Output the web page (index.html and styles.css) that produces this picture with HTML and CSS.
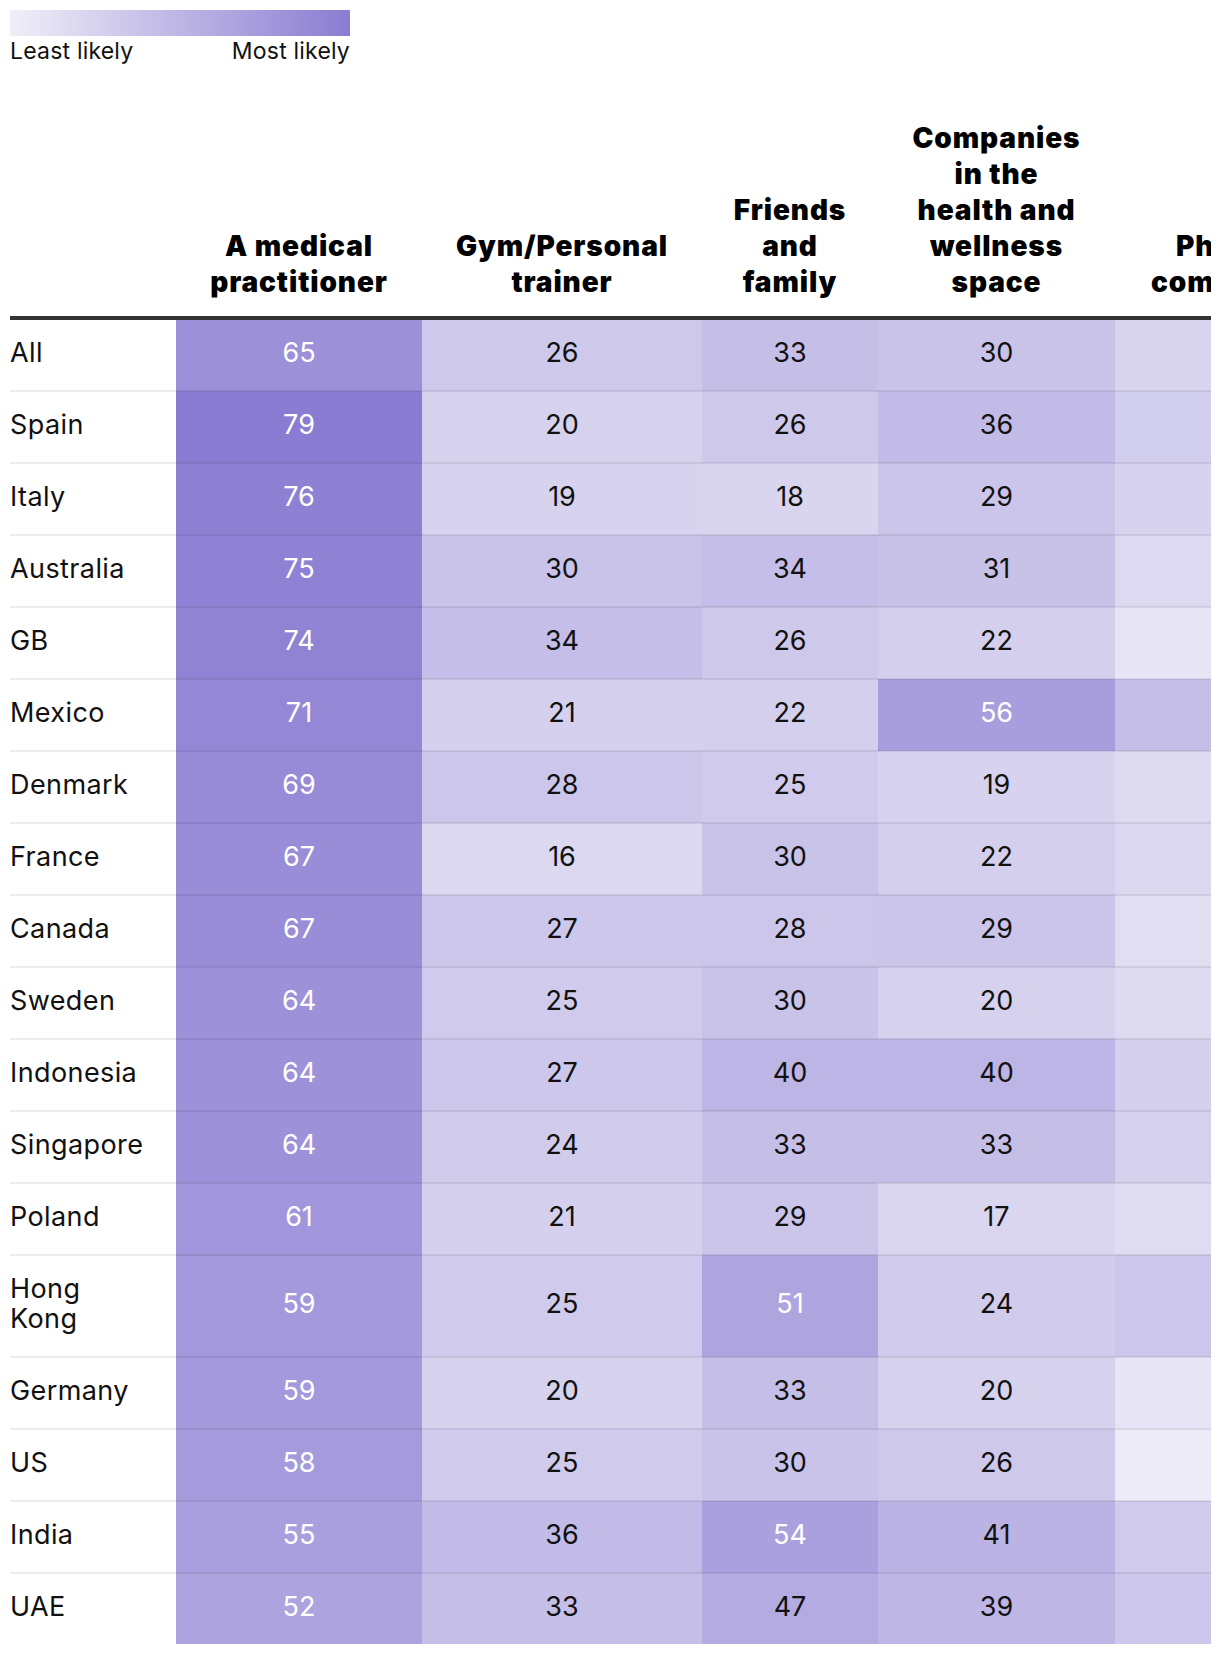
FILE: index.html
```html
<!DOCTYPE html>
<html lang="en">
<head>
<meta charset="utf-8">
<title>Heatmap</title>
<link rel="stylesheet" href="styles.css">
</head>
<body>
<div class="page">
  <div class="legend">
    <div class="legend-bar"></div>
    <div class="legend-labels"><span>Least likely</span><span>Most likely</span></div>
  </div>
  <div class="scroll">
    <table class="heat">
      <colgroup>
        <col class="c-label"><col class="c-1"><col class="c-2"><col class="c-3"><col class="c-4"><col class="c-5">
      </colgroup>
      <thead>
        <tr>
          <th></th>
          <th>A medical<br>practitioner</th>
          <th>Gym/Personal<br>trainer</th>
          <th>Friends<br>and<br>family</th>
          <th>Companies<br>in the<br>health and<br>wellness<br>space</th>
          <th>Pharma<br>companies</th>
        </tr>
      </thead>
      <tbody>
        <tr><td class="lbl">All</td><td class="hi" style="--v:65">65</td><td style="--v:26">26</td><td style="--v:33">33</td><td style="--v:30">30</td><td style="--v:18">18</td></tr>
        <tr><td class="lbl">Spain</td><td class="hi" style="--v:79">79</td><td style="--v:20">20</td><td style="--v:26">26</td><td style="--v:36">36</td><td style="--v:23">23</td></tr>
        <tr><td class="lbl">Italy</td><td class="hi" style="--v:76">76</td><td style="--v:19">19</td><td style="--v:18">18</td><td style="--v:29">29</td><td style="--v:19">19</td></tr>
        <tr><td class="lbl">Australia</td><td class="hi" style="--v:75">75</td><td style="--v:30">30</td><td style="--v:34">34</td><td style="--v:31">31</td><td style="--v:15">15</td></tr>
        <tr><td class="lbl">GB</td><td class="hi" style="--v:74">74</td><td style="--v:34">34</td><td style="--v:26">26</td><td style="--v:22">22</td><td style="--v:7">7</td></tr>
        <tr><td class="lbl">Mexico</td><td class="hi" style="--v:71">71</td><td style="--v:21">21</td><td style="--v:22">22</td><td class="hi" style="--v:56">56</td><td style="--v:33">33</td></tr>
        <tr><td class="lbl">Denmark</td><td class="hi" style="--v:69">69</td><td style="--v:28">28</td><td style="--v:25">25</td><td style="--v:19">19</td><td style="--v:14">14</td></tr>
        <tr><td class="lbl">France</td><td class="hi" style="--v:67">67</td><td style="--v:16">16</td><td style="--v:30">30</td><td style="--v:22">22</td><td style="--v:16">16</td></tr>
        <tr><td class="lbl">Canada</td><td class="hi" style="--v:67">67</td><td style="--v:27">27</td><td style="--v:28">28</td><td style="--v:29">29</td><td style="--v:12">12</td></tr>
        <tr><td class="lbl">Sweden</td><td class="hi" style="--v:64">64</td><td style="--v:25">25</td><td style="--v:30">30</td><td style="--v:20">20</td><td style="--v:14">14</td></tr>
        <tr><td class="lbl">Indonesia</td><td class="hi" style="--v:64">64</td><td style="--v:27">27</td><td style="--v:40">40</td><td style="--v:40">40</td><td style="--v:21">21</td></tr>
        <tr><td class="lbl">Singapore</td><td class="hi" style="--v:64">64</td><td style="--v:24">24</td><td style="--v:33">33</td><td style="--v:33">33</td><td style="--v:20">20</td></tr>
        <tr><td class="lbl">Poland</td><td class="hi" style="--v:61">61</td><td style="--v:21">21</td><td style="--v:29">29</td><td style="--v:17">17</td><td style="--v:13">13</td></tr>
        <tr><td class="lbl">Hong<br>Kong</td><td class="hi" style="--v:59">59</td><td style="--v:25">25</td><td class="hi" style="--v:51">51</td><td style="--v:24">24</td><td style="--v:28">28</td></tr>
        <tr><td class="lbl">Germany</td><td class="hi" style="--v:59">59</td><td style="--v:20">20</td><td style="--v:33">33</td><td style="--v:20">20</td><td style="--v:7">7</td></tr>
        <tr><td class="lbl">US</td><td class="hi" style="--v:58">58</td><td style="--v:25">25</td><td style="--v:30">30</td><td style="--v:26">26</td><td style="--v:3">3</td></tr>
        <tr><td class="lbl">India</td><td class="hi" style="--v:55">55</td><td style="--v:36">36</td><td class="hi" style="--v:54">54</td><td style="--v:41">41</td><td style="--v:25">25</td></tr>
        <tr><td class="lbl">UAE</td><td class="hi" style="--v:52">52</td><td style="--v:33">33</td><td style="--v:47">47</td><td style="--v:39">39</td><td style="--v:27">27</td></tr>
      </tbody>
    </table>
  </div>
</div>
</body>
</html>
```

FILE: styles.css
```css
* { box-sizing: border-box; }

body {
  margin: 0;
  background: #ffffff;
  color: #111111;
  font-family: Inter, "Noto Sans", sans-serif;
}

.page {
  padding: 10px 9px 0 10px;
}

.legend {
  width: 340px;
}

.legend-bar {
  height: 26px;
  background: linear-gradient(to right, #f0eff8 0%, #8a7cd2 100%);
}

.legend-labels {
  display: flex;
  justify-content: space-between;
  margin-top: 1px;
  font-size: 23px;
  line-height: 28px;
  letter-spacing: 0.2px;
  color: #111;
}

.scroll {
  margin-top: 55px;
  overflow: hidden;
}

.heat {
  border-collapse: collapse;
  table-layout: fixed;
  width: 1341px;
}

.c-label { width: 166px; }
.c-1 { width: 246px; }
.c-2 { width: 280px; }
.c-3 { width: 176px; }
.c-4 { width: 237px; }
.c-5 { width: 236px; }

.heat th {
  padding: 0 0 16px;
  vertical-align: bottom;
  text-align: center;
  font-size: 28px;
  line-height: 36px;
  font-weight: 900;
  letter-spacing: 0.9px;
  color: #000;
  border-bottom: 4px solid #333333;
  white-space: nowrap;
}

.heat td {
  padding: 18px 0 22px;
  font-size: 27px;
  line-height: 30px;
  text-align: center;
  vertical-align: middle;
  color: #111;
  border-bottom: 2px solid rgba(0, 0, 0, 0.075);
  background: rgb(calc(240 - 102 * var(--v, 0) / 79), calc(239 - 115 * var(--v, 0) / 79), calc(248 - 38 * var(--v, 0) / 79));
}

.heat tbody tr:last-child td {
  border-bottom: none;
}

.heat td.lbl {
  text-align: left;
  vertical-align: top;
  letter-spacing: 0.4px;
  background: #ffffff;
  border-bottom-color: #ececec;
}

.heat td.hi {
  color: #ffffff;
}
```
